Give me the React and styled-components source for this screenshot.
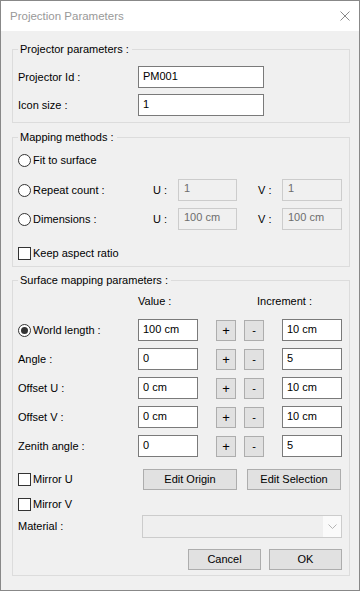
import styled, { createGlobalStyle } from 'styled-components'

const GlobalStyle = createGlobalStyle`
  html, body {
    margin: 0;
    padding: 0;
    background: #fff;
  }

  body {
    font-family: "Liberation Sans", Arial, sans-serif;
    font-size: 11px;
    line-height: 13px;
    color: #000;
  }

  * {
    box-sizing: border-box;
  }
`;

const Window = styled.div`
  width: 360px;
  border: 1px solid #888;
  background: #f0f0f0;
`;

const TitleBar = styled.div`
  height: 30px;
  display: flex;
  align-items: center;
  justify-content: space-between;
  padding: 0 9px 0 9px;
  background: #fff;
  font-size: 11.5px;
  color: #999;
`;

const Body = styled.div`
  padding: 12px 9px 14px 11px;
`;

const Group = styled.fieldset`
  margin: ${p => p.$mt || 0}px 0 0;
  padding: ${p => p.$pt}px 6px ${p => p.$pb}px 5px;
  border: 1px solid #dcdcdc;
  min-width: 0;
  display: flex;
  flex-direction: column;
`;

const Legend = styled.legend`
  padding: 0 3px 0 2px;
  line-height: 13px;
`;

const Row = styled.div`
  display: flex;
  align-items: center;
  height: ${p => p.$h || 22}px;
  margin-top: ${p => p.$mt || 0}px;
  justify-content: ${p => p.$end ? 'flex-end' : 'flex-start'};
`;

const Label = styled.div`
  width: ${p => p.$w}px;
  flex: none;
  display: flex;
  align-items: center;
  white-space: nowrap;
`;

const TextBox = styled.input`
  width: ${p => p.$w}px;
  height: 22px;
  flex: none;
  margin: 0 0 0 ${p => p.$ml || 0}px;
  padding: 0 4px 2px;
  border: 1px solid #7a7a7a;
  background: #fff;
  font: inherit;
  color: #000;
  outline: none;

  &:disabled {
    border-color: #ccc;
    background: #f0f0f0;
    color: #6d6d6d;
    padding: 0 5px 4px;
  }
`;

const Radio = styled.span`
  position: relative;
  width: 13px;
  height: 13px;
  flex: none;
  margin-right: 2px;
  border: 1px solid #333;
  border-radius: 50%;
  background: #fff;

  &::after {
    content: '';
    display: ${p => p.$on ? 'block' : 'none'};
    position: absolute;
    left: 2px;
    top: 2px;
    width: 7px;
    height: 7px;
    border-radius: 50%;
    background: #333;
  }
`;

const Check = styled.span`
  width: 13px;
  height: 13px;
  flex: none;
  margin-right: 2px;
  border: 1px solid #333;
  background: #fff;
`;

const Button = styled.button`
  width: ${p => p.$w}px;
  height: 21px;
  flex: none;
  margin: 0 ${p => p.$mr || 0}px 0 ${p => p.$ml || 0}px;
  padding: 0;
  border: 1px solid #adadad;
  background: #e1e1e1;
  font: inherit;
  font-size: ${p => p.$fs || 11}px;
  color: #000;
`;

const AxisLabel = styled.div`
  width: ${p => p.$w}px;
  flex: none;
  margin-left: ${p => p.$ml || 0}px;
`;

const Combo = styled.div`
  width: 200px;
  height: 23px;
  flex: none;
  display: flex;
  border: 1px solid #ccc;
  background: #efefef;
`;

const ComboArrow = styled.div`
  margin-left: auto;
  width: 18px;
  display: flex;
  align-items: center;
  justify-content: center;
  background: #fafafa;
`;

function CloseIcon() {
  return (
    <svg width="10" height="10" viewBox="0 0 10 10">
      <path d="M0.5 0.5 L9.5 9.5 M9.5 0.5 L0.5 9.5" stroke="#8a8a8a" strokeWidth="1" fill="none" />
    </svg>
  )
}

function Chevron() {
  return (
    <svg width="9" height="5" viewBox="0 0 9 5">
      <path d="M0.5 0.5 L4.5 4.5 L8.5 0.5" stroke="#b5b5b5" strokeWidth="1" fill="none" />
    </svg>
  )
}

const steps = [
  { name: 'World length :', value: '100 cm', inc: '10 cm', radio: true },
  { name: 'Angle :', value: '0', inc: '5' },
  { name: 'Offset U :', value: '0 cm', inc: '10 cm' },
  { name: 'Offset V :', value: '0 cm', inc: '10 cm' },
  { name: 'Zenith angle :', value: '0', inc: '5' },
]

function App() {
  return (
    <>
      <GlobalStyle />
      <Window>
        <TitleBar>
          <span>Projection Parameters</span>
          <CloseIcon />
        </TitleBar>
        <Body>
          <Group $pt={10} $pb={6}>
            <Legend>Projector parameters :</Legend>
            <Row>
              <Label $w={120}>Projector Id :</Label>
              <TextBox $w={126} defaultValue="PM001" />
            </Row>
            <Row $mt={6}>
              <Label $w={120}>Icon size :</Label>
              <TextBox $w={126} defaultValue="1" />
            </Row>
          </Group>

          <Group $mt={8} $pt={5} $pb={2}>
            <Legend>Mapping methods :</Legend>
            <Row>
              <Label $w={135}><Radio />Fit to surface</Label>
            </Row>
            <Row $mt={8}>
              <Label $w={135}><Radio />Repeat count :</Label>
              <AxisLabel $w={25}>U :</AxisLabel>
              <TextBox $w={59} disabled defaultValue="1" />
              <AxisLabel $w={24} $ml={21}>V :</AxisLabel>
              <TextBox $w={60} disabled defaultValue="1" />
            </Row>
            <Row $mt={7}>
              <Label $w={135}><Radio />Dimensions :</Label>
              <AxisLabel $w={25}>U :</AxisLabel>
              <TextBox $w={59} disabled defaultValue="100 cm" />
              <AxisLabel $w={24} $ml={21}>V :</AxisLabel>
              <TextBox $w={60} disabled defaultValue="100 cm" />
            </Row>
            <Row $mt={12}>
              <Label $w={135}><Check />Keep aspect ratio</Label>
            </Row>
          </Group>

          <Group $mt={7} $pt={6} $pb={5}>
            <Legend>Surface mapping parameters :</Legend>
            <Row $h={16}>
              <Label $w={120} />
              <Label $w={119}>Value :</Label>
              <Label $w={80}>Increment :</Label>
            </Row>
            {steps.map((s, i) => (
              <Row key={s.name} $mt={i === 0 ? 10 : 7}>
                <Label $w={120}>
                  {s.radio && <Radio $on />}
                  {s.name}
                </Label>
                <TextBox $w={60} defaultValue={s.value} />
                <Button $w={20} $ml={18} $fs={13}>+</Button>
                <Button $w={20} $ml={8}>-</Button>
                <TextBox $w={60} $ml={18} defaultValue={s.inc} />
              </Row>
            ))}
            <Row $mt={11}>
              <Label $w={125}><Check />Mirror U</Label>
              <Button $w={94}>Edit Origin</Button>
              <Button $w={94} $ml={10}>Edit Selection</Button>
            </Row>
            <Row $h={18} $mt={5}>
              <Label $w={125}><Check />Mirror V</Label>
            </Row>
            <Row $h={23} $mt={2}>
              <Label $w={124}>Material :</Label>
              <Combo>
                <ComboArrow><Chevron /></ComboArrow>
              </Combo>
            </Row>
            <Row $h={21} $mt={11} $end>
              <Button $w={73}>Cancel</Button>
              <Button $w={73} $ml={8} $mr={1}>OK</Button>
            </Row>
          </Group>
        </Body>
      </Window>
    </>
  )
}

export default App
